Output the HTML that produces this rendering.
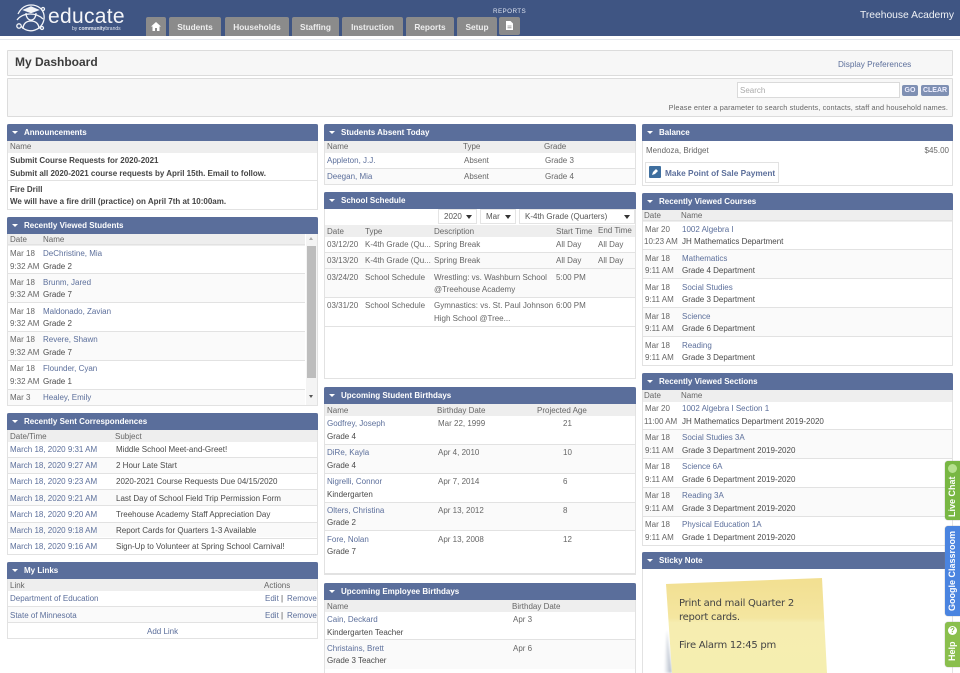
<!DOCTYPE html>
<html><head><meta charset="utf-8"><style>
html,body{margin:0;padding:0;background:#fff;width:960px;height:673px;overflow:hidden}
body{position:relative;font:8px/12px "Liberation Sans",sans-serif;color:#4a4a4a;filter:blur(.3px)}
div,span,a{position:absolute;display:block}
span,a{white-space:nowrap;transform:translateY(1px)}
a{color:#5c6f9b;text-decoration:none}
.p{background:#fff;border:1px solid #e2e2e2;border-top:0;box-sizing:border-box}
.h{height:17px;background:#5a6e9b;border-radius:2px 2px 0 0;color:#fff;font-weight:bold;line-height:17px;box-sizing:border-box;padding-left:17px}
.h:before{content:"";position:absolute;left:5px;top:7px;border:3px solid transparent;border-top:3.5px solid #fff;border-bottom:0}
.th{height:12px;background:#eeeeee}
.l{height:1px;background:#e2e2e2}
.alt{background:#fafafa}
.n{color:#666}
.b{font-weight:bold;color:#444}
.tab{top:17px;height:19px;background:#8b8b8b;border-radius:2px 2px 0 0;color:#eee;font-weight:bold;text-align:center;line-height:20px;font-size:8.3px}
.sel{top:209px;height:15px;background:#fff;border:1px solid #e4e4e4;box-sizing:border-box;line-height:14px;padding-left:5px;color:#555}
.sel:after{content:"";position:absolute;right:4px;top:5px;border:3px solid transparent;border-top:4px solid #333;border-bottom:0}
.tb{left:945px;width:15px;border-radius:3px 0 0 3px;box-shadow:0 0 1px #888}
.v{left:945px;width:15px;color:#fff;font-weight:bold;font-size:9px;text-align:center;writing-mode:vertical-rl;transform:rotate(180deg);line-height:15px;white-space:nowrap}
</style></head><body>

<!-- top bar -->
<div style="left:0;top:0;width:960px;height:36px;background:#3f5583"></div>
<div style="left:0;top:36px;width:960px;height:4px;background:#fff;border-bottom:1px solid #e4e8ee;box-sizing:border-box"></div>
<svg style="position:absolute;left:15px;top:3px" width="31" height="31" viewBox="0 0 31 31" fill="none" stroke="#f2f4f8" stroke-width="1.300">
<path d="M3 11C6 5 10 2 16 2c7 0 12 4 13 10 1 7-3 13-9 15-5 2-11 0-14-4"/>
<path d="M2 17c3-4 8-6 13-6s10 2 13 5"/>
<path d="M9 7l7-3 7 3-7 2.500z" fill="#f2f4f8"/>
<path d="M11 10c0 4 2 7 5 7s5-3 5-7"/>
<path d="M8 26c0-5 3-8 8-8s8 3 8 8"/>
<circle cx="4" cy="23" r="2.200"/><circle cx="28" cy="6" r="1.500"/><circle cx="27" cy="25" r="1.500"/>
</svg>
<span style="left:48px;top:3px;font-size:21px;line-height:26px;color:#f5f6f9;letter-spacing:.3px">educate</span>
<span style="left:72px;top:25px;font-size:5px;line-height:6px;color:#dfe3ec">by <b>community</b>brands</span>

<div class="tab" style="left:146px;width:20px"><svg style="position:absolute;left:5px;top:5px" width="10" height="9" viewBox="0 0 10 9"><path d="M5 0L0 4.500h1.500V9h2.500V6h2v3h2.500V4.500H10z" fill="#fff"/></svg></div>
<div class="tab" style="left:169px;width:52px">Students</div>
<div class="tab" style="left:225px;width:64px">Households</div>
<div class="tab" style="left:292px;width:47px">Staffing</div>
<div class="tab" style="left:342px;width:61px">Instruction</div>
<div class="tab" style="left:406px;width:48px">Reports</div>
<div class="tab" style="left:457px;width:40px">Setup</div>
<div class="tab" style="left:499px;width:21px;height:18px;border-radius:2px"><svg style="position:absolute;left:6px;top:4px" width="9" height="10" viewBox="0 0 9 10"><path d="M1 0h4.500L8 2.500V9H1z" fill="#fff"/><path d="M2.500 5h4M2.500 6.800h4" stroke="#8b8b8b" stroke-width=".8"/></svg></div>
<span style="left:493px;top:5px;font-size:6.300px;color:#dde3f0;letter-spacing:.4px">REPORTS</span>
<span style="right:6px;top:9px;font-size:10.300px;color:#f0f2f6">Treehouse Academy</span>

<!-- title / search -->
<div style="left:7px;top:50px;width:946px;height:26px;background:#f7f7f7;border:1px solid #dcdcdc;box-sizing:border-box;border-radius:1px"></div>
<span style="left:15px;top:54px;font-size:12px;line-height:14px;font-weight:bold;color:#3c3c3c">My Dashboard</span>
<a style="left:838px;top:58px;font-size:8.200px">Display Preferences</a>
<div style="left:7px;top:78px;width:946px;height:39px;background:#f7f7f7;border:1px solid #dcdcdc;box-sizing:border-box;border-radius:1px"></div>
<div style="left:737px;top:82px;width:163px;height:16px;background:#fff;border:1px solid #dadada;box-sizing:border-box"></div>
<span style="left:740px;top:84px;color:#aaa">Search</span>
<div style="left:902px;top:85px;width:16px;height:11px;background:#7f90b3;border-radius:2px;color:#eef;font-size:7px;font-weight:bold;text-align:center;line-height:11px">GO</div>
<div style="left:921px;top:85px;width:28px;height:11px;background:#7f90b3;border-radius:2px;color:#eef;font-size:7px;font-weight:bold;text-align:center;line-height:11px">CLEAR</div>
<span style="right:12px;top:101px;font-size:7.300px;color:#666;letter-spacing:.13px">Please enter a parameter to search students, contacts, staff and household names.</span>

<!-- COLUMN 1 -->
<div class="p" style="left:7px;top:124px;width:311px;height:86px"></div>
<div class="h" style="left:7px;top:124px;width:311px">Announcements</div>
<div class="th" style="left:8px;top:141px;width:309px"></div>
<span class="n" style="left:10px;top:140px">Name</span>
<span class="b" style="left:10px;top:154px">Submit Course Requests for 2020-2021</span>
<span class="b" style="left:10px;top:167px">Submit all 2020-2021 course requests by April 15th. Email to follow.</span>
<div class="l" style="left:8px;top:180px;width:309px"></div>
<span class="b" style="left:10px;top:183px">Fire Drill</span>
<span class="b" style="left:10px;top:195px">We will have a fire drill (practice) on April 7th at 10:00am.</span>

<div class="p" style="left:7px;top:217px;width:311px;height:189px"></div>
<div class="h" style="left:7px;top:217px;width:311px">Recently Viewed Students</div>
<div class="th" style="left:8px;top:234px;width:297px"></div>
<span class="n" style="left:10px;top:233px">Date</span><span class="n" style="left:43px;top:233px">Name</span>
<div class="alt" style="left:8px;top:274px;width:297px;height:28px"></div>
<div class="alt" style="left:8px;top:332px;width:297px;height:28px"></div>
<div class="alt" style="left:8px;top:390px;width:297px;height:15px"></div>
<div class="l" style="left:8px;top:244px;width:297px"></div>
<div class="l" style="left:8px;top:273px;width:297px"></div>
<div class="l" style="left:8px;top:302px;width:297px"></div>
<div class="l" style="left:8px;top:331px;width:297px"></div>
<div class="l" style="left:8px;top:360px;width:297px"></div>
<div class="l" style="left:8px;top:389px;width:297px"></div>
<span class="n" style="left:10px;top:247px">Mar 18</span><a style="left:43px;top:247px">DeChristine, Mia</a>
<span class="n" style="left:10px;top:260px">9:32 AM</span><span style="left:43px;top:260px">Grade 2</span>
<span class="n" style="left:10px;top:276px">Mar 18</span><a style="left:43px;top:276px">Brunm, Jared</a>
<span class="n" style="left:10px;top:288px">9:32 AM</span><span style="left:43px;top:288px">Grade 7</span>
<span class="n" style="left:10px;top:305px">Mar 18</span><a style="left:43px;top:305px">Maldonado, Zavian</a>
<span class="n" style="left:10px;top:317px">9:32 AM</span><span style="left:43px;top:317px">Grade 2</span>
<span class="n" style="left:10px;top:333px">Mar 18</span><a style="left:43px;top:333px">Revere, Shawn</a>
<span class="n" style="left:10px;top:346px">9:32 AM</span><span style="left:43px;top:346px">Grade 7</span>
<span class="n" style="left:10px;top:362px">Mar 18</span><a style="left:43px;top:362px">Flounder, Cyan</a>
<span class="n" style="left:10px;top:375px">9:32 AM</span><span style="left:43px;top:375px">Grade 1</span>
<span class="n" style="left:10px;top:391px">Mar 3</span><a style="left:43px;top:391px">Healey, Emily</a>
<div style="left:306px;top:234px;width:11px;height:171px;background:#f4f4f4"></div>
<div style="left:307px;top:246px;width:9px;height:132px;background:#bdbdbd"></div>
<div style="left:309px;top:237px;border:2.500px solid transparent;border-bottom:3px solid #aaa;border-top:0"></div>
<div style="left:309px;top:395px;border:2.500px solid transparent;border-top:3px solid #555;border-bottom:0"></div>

<div class="p" style="left:7px;top:413px;width:311px;height:142px"></div>
<div class="h" style="left:7px;top:413px;width:311px">Recently Sent Correspondences</div>
<div class="th" style="left:8px;top:430px;width:309px"></div>
<span class="n" style="left:10px;top:430px">Date/Time</span><span class="n" style="left:115px;top:430px">Subject</span>
<div class="alt" style="left:8px;top:458px;width:309px;height:15px"></div>
<div class="alt" style="left:8px;top:490px;width:309px;height:15px"></div>
<div class="alt" style="left:8px;top:522px;width:309px;height:15px"></div>
<div class="l" style="left:8px;top:457px;width:309px"></div>
<div class="l" style="left:8px;top:473px;width:309px"></div>
<div class="l" style="left:8px;top:489px;width:309px"></div>
<div class="l" style="left:8px;top:505px;width:309px"></div>
<div class="l" style="left:8px;top:522px;width:309px"></div>
<div class="l" style="left:8px;top:538px;width:309px"></div>
<a style="left:10px;top:443px">March 18, 2020 9:31 AM</a><span style="left:116px;top:443px">Middle School Meet-and-Greet!</span>
<a style="left:10px;top:459px">March 18, 2020 9:27 AM</a><span style="left:116px;top:459px">2 Hour Late Start</span>
<a style="left:10px;top:475px">March 18, 2020 9:23 AM</a><span style="left:116px;top:475px">2020-2021 Course Requests Due 04/15/2020</span>
<a style="left:10px;top:492px">March 18, 2020 9:21 AM</a><span style="left:116px;top:492px">Last Day of School Field Trip Permission Form</span>
<a style="left:10px;top:508px">March 18, 2020 9:20 AM</a><span style="left:116px;top:508px">Treehouse Academy Staff Appreciation Day</span>
<a style="left:10px;top:524px">March 18, 2020 9:18 AM</a><span style="left:116px;top:524px">Report Cards for Quarters 1-3 Available</span>
<a style="left:10px;top:540px">March 18, 2020 9:16 AM</a><span style="left:116px;top:540px">Sign-Up to Volunteer at Spring School Carnival!</span>

<div class="p" style="left:7px;top:562px;width:311px;height:77px"></div>
<div class="h" style="left:7px;top:562px;width:311px">My Links</div>
<div class="th" style="left:8px;top:579px;width:309px"></div>
<span class="n" style="left:10px;top:579px">Link</span><span class="n" style="left:264px;top:579px">Actions</span>
<div class="alt" style="left:8px;top:607px;width:309px;height:15px"></div>
<div class="l" style="left:8px;top:606px;width:309px"></div>
<div class="l" style="left:8px;top:622px;width:309px"></div>
<a style="left:10px;top:592px">Department of Education</a>
<a style="left:265px;top:592px">Edit</a><span style="left:281px;top:592px">|</span><a style="left:287px;top:592px">Remove</a>
<a style="left:10px;top:609px">State of Minnesota</a>
<a style="left:265px;top:609px">Edit</a><span style="left:281px;top:609px">|</span><a style="left:287px;top:609px">Remove</a>
<a style="left:147px;top:625px">Add Link</a>

<!-- COLUMN 2 -->
<div class="p" style="left:324px;top:124px;width:312px;height:61px"></div>
<div class="h" style="left:324px;top:124px;width:312px">Students Absent Today</div>
<div class="th" style="left:325px;top:141px;width:310px"></div>
<span class="n" style="left:327px;top:140px">Name</span><span class="n" style="left:463px;top:140px">Type</span><span class="n" style="left:544px;top:140px">Grade</span>
<div class="alt" style="left:325px;top:168px;width:310px;height:16px"></div>
<div class="l" style="left:325px;top:168px;width:310px"></div>
<a style="left:327px;top:154px">Appleton, J.J.</a><span class="n" style="left:464px;top:154px">Absent</span><span class="n" style="left:545px;top:154px">Grade 3</span>
<a style="left:327px;top:170px">Deegan, Mia</a><span class="n" style="left:464px;top:170px">Absent</span><span class="n" style="left:545px;top:170px">Grade 4</span>

<div class="p" style="left:324px;top:192px;width:312px;height:187px"></div>
<div class="h" style="left:324px;top:192px;width:312px">School Schedule</div>
<div class="sel" style="left:438px;width:39px">2020</div>
<div class="sel" style="left:480px;width:36px">Mar</div>
<div class="sel" style="left:519px;width:116px">K-4th Grade (Quarters)</div>
<div class="th" style="left:325px;top:225px;width:310px"></div>
<span class="n" style="left:327px;top:225px">Date</span><span class="n" style="left:365px;top:225px">Type</span><span class="n" style="left:434px;top:225px">Description</span><span class="n" style="left:556px;top:225px">Start Time</span><span class="n" style="left:598px;top:224px">End Time</span>
<div class="alt" style="left:325px;top:253px;width:310px;height:15px"></div>
<div class="alt" style="left:325px;top:269px;width:310px;height:28px"></div>
<div class="l" style="left:325px;top:252px;width:310px"></div>
<div class="l" style="left:325px;top:268px;width:310px"></div>
<div class="l" style="left:325px;top:297px;width:310px"></div>
<div class="l" style="left:325px;top:326px;width:310px"></div>
<span class="n" style="left:327px;top:238px">03/12/20</span><span class="n" style="left:365px;top:238px">K-4th Grade (Qu...</span><span class="n" style="left:434px;top:238px">Spring Break</span><span class="n" style="left:556px;top:238px">All Day</span><span class="n" style="left:598px;top:238px">All Day</span>
<span class="n" style="left:327px;top:254px">03/13/20</span><span class="n" style="left:365px;top:254px">K-4th Grade (Qu...</span><span class="n" style="left:434px;top:254px">Spring Break</span><span class="n" style="left:556px;top:254px">All Day</span><span class="n" style="left:598px;top:254px">All Day</span>
<span class="n" style="left:327px;top:271px">03/24/20</span><span class="n" style="left:365px;top:271px">School Schedule</span><span class="n" style="left:434px;top:271px">Wrestling: vs. Washburn School</span><span class="n" style="left:556px;top:271px">5:00 PM</span>
<span class="n" style="left:434px;top:283px">@Treehouse Academy</span>
<span class="n" style="left:327px;top:299px">03/31/20</span><span class="n" style="left:365px;top:299px">School Schedule</span><span class="n" style="left:434px;top:299px">Gymnastics: vs. St. Paul Johnson</span><span class="n" style="left:556px;top:299px">6:00 PM</span>
<span class="n" style="left:434px;top:312px">High School @Tree...</span>

<div class="p" style="left:324px;top:387px;width:312px;height:188px"></div>
<div class="h" style="left:324px;top:387px;width:312px">Upcoming Student Birthdays</div>
<div class="th" style="left:325px;top:404px;width:310px"></div>
<span class="n" style="left:327px;top:404px">Name</span><span class="n" style="left:437px;top:404px">Birthday Date</span><span class="n" style="left:537px;top:404px">Projected Age</span>
<div class="alt" style="left:325px;top:444px;width:310px;height:29px"></div>
<div class="alt" style="left:325px;top:502px;width:310px;height:29px"></div>
<div class="l" style="left:325px;top:444px;width:310px"></div>
<div class="l" style="left:325px;top:473px;width:310px"></div>
<div class="l" style="left:325px;top:502px;width:310px"></div>
<div class="l" style="left:325px;top:530px;width:310px"></div>
<div class="l" style="left:325px;top:573px;width:310px"></div>
<a style="left:327px;top:417px">Godfrey, Joseph</a><span class="n" style="left:438px;top:417px">Mar 22, 1999</span><span class="n" style="left:563px;top:417px">21</span>
<span style="left:327px;top:430px">Grade 4</span>
<a style="left:327px;top:446px">DiRe, Kayla</a><span class="n" style="left:438px;top:446px">Apr 4, 2010</span><span class="n" style="left:563px;top:446px">10</span>
<span style="left:327px;top:459px">Grade 4</span>
<a style="left:327px;top:475px">Nigrelli, Connor</a><span class="n" style="left:438px;top:475px">Apr 7, 2014</span><span class="n" style="left:563px;top:475px">6</span>
<span style="left:327px;top:488px">Kindergarten</span>
<a style="left:327px;top:504px">Olters, Christina</a><span class="n" style="left:438px;top:504px">Apr 13, 2012</span><span class="n" style="left:563px;top:504px">8</span>
<span style="left:327px;top:516px">Grade 2</span>
<a style="left:327px;top:533px">Fore, Nolan</a><span class="n" style="left:438px;top:533px">Apr 13, 2008</span><span class="n" style="left:563px;top:533px">12</span>
<span style="left:327px;top:545px">Grade 7</span>

<div class="p" style="left:324px;top:583px;width:312px;height:90px;border-bottom:0"></div>
<div class="h" style="left:324px;top:583px;width:312px">Upcoming Employee Birthdays</div>
<div class="th" style="left:325px;top:600px;width:310px"></div>
<span class="n" style="left:327px;top:600px">Name</span><span class="n" style="left:512px;top:600px">Birthday Date</span>
<div class="alt" style="left:325px;top:640px;width:310px;height:29px"></div>
<div class="l" style="left:325px;top:639px;width:310px"></div>
<a style="left:327px;top:613px">Cain, Deckard</a><span class="n" style="left:513px;top:613px">Apr 3</span>
<span style="left:327px;top:626px">Kindergarten Teacher</span>
<a style="left:327px;top:642px">Christains, Brett</a><span class="n" style="left:513px;top:642px">Apr 6</span>
<span style="left:327px;top:654px">Grade 3 Teacher</span>

<!-- COLUMN 3 -->
<div class="p" style="left:642px;top:124px;width:311px;height:62px"></div>
<div class="h" style="left:642px;top:124px;width:311px">Balance</div>
<span class="n" style="left:646px;top:144px">Mendoza, Bridget</span>
<span class="n" style="right:11px;top:144px">$45.00</span>
<div style="left:645px;top:162px;width:134px;height:21px;background:#fff;border:1px solid #e2e2e2;box-sizing:border-box"></div>
<div style="left:649px;top:166px;width:12px;height:12px;background:#3f6f9f;border-radius:1px"></div>
<svg style="position:absolute;left:651px;top:168px" width="8" height="8" viewBox="0 0 8 8"><path d="M1 7l1-3 3-3 2 2-3 3z" fill="#fff"/></svg>
<a style="left:665px;top:166px;font-weight:bold;font-size:8.300px">Make Point of Sale Payment</a>

<div class="p" style="left:642px;top:193px;width:311px;height:173px"></div>
<div class="h" style="left:642px;top:193px;width:311px">Recently Viewed Courses</div>
<div class="th" style="left:643px;top:210px;width:309px"></div>
<span class="n" style="left:644px;top:209px">Date</span><span class="n" style="left:681px;top:209px">Name</span>
<div class="alt" style="left:643px;top:250px;width:309px;height:28px"></div>
<div class="alt" style="left:643px;top:308px;width:309px;height:28px"></div>
<div class="l" style="left:643px;top:220px;width:309px"></div>
<div class="l" style="left:643px;top:249px;width:309px"></div>
<div class="l" style="left:643px;top:278px;width:309px"></div>
<div class="l" style="left:643px;top:307px;width:309px"></div>
<div class="l" style="left:643px;top:336px;width:309px"></div>
<span class="n" style="left:645px;top:223px">Mar 20</span><a style="left:682px;top:223px">1002 Algebra I</a>
<span class="n" style="left:644px;top:235px">10:23 AM</span><span style="left:682px;top:235px">JH Mathematics Department</span>
<span class="n" style="left:645px;top:252px">Mar 18</span><a style="left:682px;top:252px">Mathematics</a>
<span class="n" style="left:645px;top:264px">9:11 AM</span><span style="left:682px;top:264px">Grade 4 Department</span>
<span class="n" style="left:645px;top:281px">Mar 18</span><a style="left:682px;top:281px">Social Studies</a>
<span class="n" style="left:645px;top:293px">9:11 AM</span><span style="left:682px;top:293px">Grade 3 Department</span>
<span class="n" style="left:645px;top:310px">Mar 18</span><a style="left:682px;top:310px">Science</a>
<span class="n" style="left:645px;top:322px">9:11 AM</span><span style="left:682px;top:322px">Grade 6 Department</span>
<span class="n" style="left:645px;top:339px">Mar 18</span><a style="left:682px;top:339px">Reading</a>
<span class="n" style="left:645px;top:351px">9:11 AM</span><span style="left:682px;top:351px">Grade 3 Department</span>

<div class="p" style="left:642px;top:373px;width:311px;height:173px"></div>
<div class="h" style="left:642px;top:373px;width:311px">Recently Viewed Sections</div>
<div class="th" style="left:643px;top:390px;width:309px"></div>
<span class="n" style="left:644px;top:389px">Date</span><span class="n" style="left:681px;top:389px">Name</span>
<div class="alt" style="left:643px;top:430px;width:309px;height:28px"></div>
<div class="alt" style="left:643px;top:488px;width:309px;height:28px"></div>
<div class="l" style="left:643px;top:429px;width:309px"></div>
<div class="l" style="left:643px;top:458px;width:309px"></div>
<div class="l" style="left:643px;top:487px;width:309px"></div>
<div class="l" style="left:643px;top:516px;width:309px"></div>
<span class="n" style="left:645px;top:402px">Mar 20</span><a style="left:682px;top:402px">1002 Algebra I Section 1</a>
<span class="n" style="left:644px;top:415px">11:00 AM</span><span style="left:682px;top:415px">JH Mathematics Department 2019-2020</span>
<span class="n" style="left:645px;top:431px">Mar 18</span><a style="left:682px;top:431px">Social Studies 3A</a>
<span class="n" style="left:645px;top:444px">9:11 AM</span><span style="left:682px;top:444px">Grade 3 Department 2019-2020</span>
<span class="n" style="left:645px;top:460px">Mar 18</span><a style="left:682px;top:460px">Science 6A</a>
<span class="n" style="left:645px;top:473px">9:11 AM</span><span style="left:682px;top:473px">Grade 6 Department 2019-2020</span>
<span class="n" style="left:645px;top:489px">Mar 18</span><a style="left:682px;top:489px">Reading 3A</a>
<span class="n" style="left:645px;top:502px">9:11 AM</span><span style="left:682px;top:502px">Grade 3 Department 2019-2020</span>
<span class="n" style="left:645px;top:518px">Mar 18</span><a style="left:682px;top:518px">Physical Education 1A</a>
<span class="n" style="left:645px;top:531px">9:11 AM</span><span style="left:682px;top:531px">Grade 1 Department 2019-2020</span>

<div class="p" style="left:642px;top:552px;width:311px;height:121px;border-bottom:0"></div>
<div class="h" style="left:642px;top:552px;width:311px">Sticky Note</div>
<svg style="position:absolute;left:660px;top:575px" width="175" height="98" viewBox="0 0 175 98">
<defs><linearGradient id="g" x1="0" y1="0" x2="0" y2="1"><stop offset="0" stop-color="#f2df91"/><stop offset=".42" stop-color="#f4e6a0"/><stop offset=".47" stop-color="#f6edb0"/><stop offset="1" stop-color="#f5eeb0"/></linearGradient>
<linearGradient id="s" x1="0" y1="0" x2="1" y2="0"><stop offset="0" stop-color="#fff"/><stop offset="1" stop-color="#a8b2c2"/></linearGradient>
<filter id="f" x="-50%" y="-10%" width="200%" height="120%"><feGaussianBlur stdDeviation="1"/></filter></defs>
<path d="M7 55L12 98H4z" fill="url(#s)" filter="url(#f)"/>
<path d="M6 9L162 3l5 95H12z" fill="url(#g)"/>
</svg>
<span style="left:679px;top:596px;font-size:10px;line-height:14px;color:#444;font-family:'DejaVu Sans',sans-serif;letter-spacing:-.25px">Print and mail Quarter 2</span>
<span style="left:679px;top:610px;font-size:10px;line-height:14px;color:#444;font-family:'DejaVu Sans',sans-serif;letter-spacing:-.25px">report cards.</span>
<span style="left:679px;top:638px;font-size:10px;line-height:14px;color:#444;font-family:'DejaVu Sans',sans-serif;letter-spacing:-.25px">Fire Alarm 12:45 pm</span>

<!-- side tabs -->
<div class="tb" style="top:461px;height:59px;background:#78b743"></div>
<div style="left:948px;top:464px;width:9px;height:9px;border-radius:50%;background:#b6e08f"></div>
<div class="v" style="top:476px;height:42px">Live Chat</div>
<div class="tb" style="top:526px;height:90px;background:#4a84e0"></div>
<div class="v" style="top:526px;height:90px;text-align:center">Google Classroom</div>
<div class="tb" style="top:622px;height:45px;background:#8abf4d"></div>
<div style="left:948px;top:626px;width:9px;height:9px;border-radius:50%;background:#fff;color:#8abf4d;font-size:8px;line-height:9px;text-align:center;font-weight:bold">?</div>
<div class="v" style="top:638px;height:26px">Help</div>
</body></html>
